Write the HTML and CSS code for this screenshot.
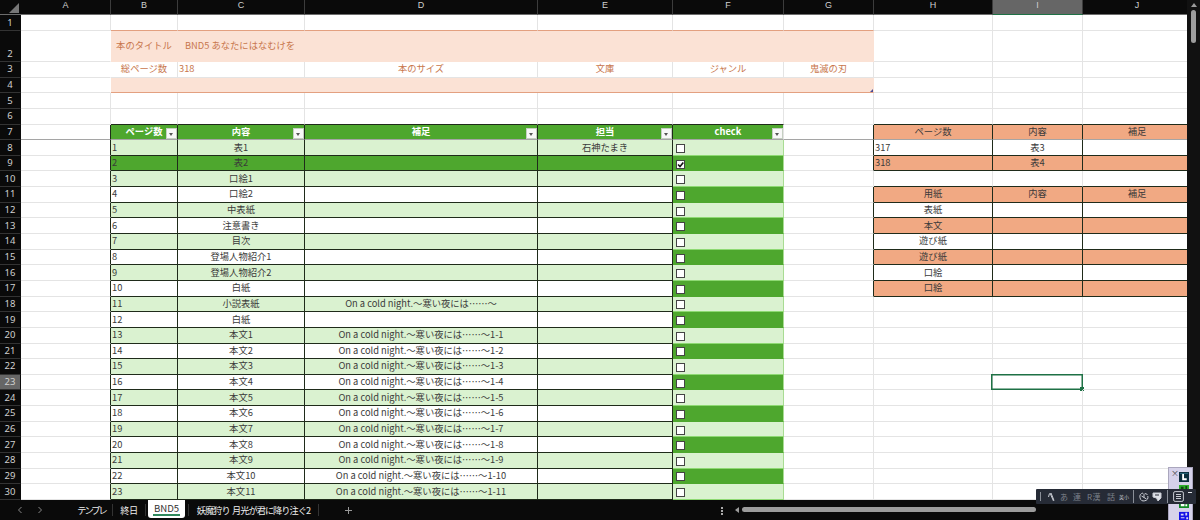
FILE: index.html
```
<!DOCTYPE html>
<html lang="ja">
<head>
    <meta charset="UTF-8">
    <meta name="viewport" content="width=device-width, initial-scale=1.0">
    <title>BND5</title>
    <link rel="stylesheet" href="styles.css">
</head>
<body>
    <div class="app">
        <div class="workspace">
            <div class="sheet" id="sheet"></div>
            <div class="v-scroll">
                <span class="arrow-up"></span>
                <span class="v-thumb"></span>
            </div>
        </div>

        <div class="bottom-bar">
            <div class="tab-nav">
                <svg viewBox="0 0 6 8"><path d="M4.5 1 1.5 4l3 3"/></svg>
                <svg viewBox="0 0 6 8"><path d="M1.5 1l3 3-3 3"/></svg>
            </div>
            <div class="tabs">
                <span class="tab tab-template">テンプレ</span>
                <span class="tab tab-day">終日</span>
                <span class="tab active">BND5</span>
                <span class="tab tab-long">妖魔狩り&nbsp; 月光が君に降り注ぐ2</span>
                <span class="add-tab"></span>
            </div>
            <div class="h-scroll">
                <span class="dots"><i></i><i></i><i></i></span>
                <span class="arrow-left"></span>
                <span class="h-thumb"></span>
            </div>
        </div>

        <div class="palette">
            <span class="palette-close">×</span>
            <div class="palette-icons">
                <svg viewBox="0 0 11 11"><rect width="11" height="11" fill="#0b2c3c"/><path d="M3.5 2h2v5h3v2h-5z" fill="#fff"/><path d="M1 1h9v1H1z" fill="#2b6c83"/></svg>
                <svg viewBox="0 0 11 11"><rect width="11" height="11" fill="#2fae2c"/><path d="M2 2h3v3H2zM7 1h2v4H7z" fill="#0b4a12"/></svg>
                <svg viewBox="0 0 11 11"><path d="M0 5h11v6H0z" fill="#128a24"/><path d="M2 6h4v3H2zM7 7h2v2H7z" fill="#fff"/></svg>
                <svg viewBox="0 0 11 11"><rect y="1" width="11" height="9" fill="#1613e6"/><path d="M2 3h3v2H2zM7 2h2v3H7zM2 7h4v1H2zM8 7h2v2H8z" fill="#d9d6f2"/></svg>
            </div>
        </div>

        <div class="ime">
            <span class="grip"></span>
            <svg class="pen" viewBox="0 0 8 10"><path d="M1.500 5 2.500 1.500M3 1l3.500 8M4 1l3 7.500"/></svg>
            <span>あ</span>
            <span>連</span>
            <span class="ime-roman">R漢</span>
            <span>話</span>
            <span class="ime-small">英小</span>
            <span class="divider"></span>
            <svg class="clock" viewBox="0 0 10 10"><path d="M4 1a4 4 0 1 0 4.800 3M5 5.500V1.500M5 5.500l2.500 1.500M6 1.500l2.500 1M2.500 4 5 5.500"/></svg>
            <svg class="shield" viewBox="0 0 10 10"><path d="M1 1h8v5L6 9 4.500 6 1 5z" fill="#dfe2e8"/><path d="M3 3h4" stroke="#262b36"/></svg>
            <span class="divider"></span>
            <svg class="list" viewBox="0 0 11 11"><rect x=".6" y=".6" width="9.800" height="9.800" rx="1.500"/><path d="M3 3.500h5M3 5.500h5M3 7.500h5"/></svg>
            <span class="minimize"></span>
        </div>
    </div>

    <script src="script.js"></script>
</body>
</html>
```
FILE: styles.css
```
* {
    margin: 0;
    padding: 0;
    box-sizing: border-box;
}

body {
    font-family: 'Noto Sans CJK JP', 'Noto Sans', sans-serif;
    background: #0a0a0a;
    overflow: hidden;
}

.app {
    position: relative;
    width: 1200px;
    height: 520px;
    display: flex;
    flex-direction: column;
    overflow: hidden;
}

.workspace {
    display: flex;
    height: 500px;
}

/* Grid of cells */
.sheet {
    width: 1187px;
    height: 500px;
    overflow: hidden;
    display: grid;
    grid-template-columns: 21px 90px 67px 127px 233px 135px 111px 90px 119px 90px 109px;
    grid-template-rows: 15px 16px 31px repeat(28, 15.65px);
    background: #fff;
}

.cell {
    position: relative;
    display: flex;
    align-items: center;
    justify-content: center;
    min-width: 0;
    padding-bottom: 2px;
    border-right: 1px solid #e4e4e4;
    border-bottom: 1px solid #e4e4e4;
    color: #3a3a3a;
    font-size: 9.3px;
    line-height: 12px;
    white-space: nowrap;
}

.head {
    background: #0a0a0a;
    color: #d0d0d0;
    border-right-color: #3c3c3c;
    border-bottom-color: #6c6c6c;
    font-family: 'Liberation Sans', sans-serif;
    font-size: 9px;
    line-height: 10px;
    padding-bottom: 4px;
}

.row-head {
    background: #0a0a0a;
    color: #d0d0d0;
    border-right-color: #0a0a0a;
    border-bottom-color: #333;
    font-family: 'Noto Sans', sans-serif;
    font-size: 9.5px;
    padding-bottom: 0;
}

.row-head.tall {
    align-items: flex-end;
    padding-bottom: 1px;
}

.head.selected,
.row-head.selected {
    background: #666;
}

.head.selected {
    border-bottom-color: #1e7145;
}

.corner {
    background: #0a0a0a;
    border-right: 0;
    border-bottom: 1px solid #6c6c6c;
}

.corner::after {
    content: '';
    position: absolute;
    right: 2px;
    bottom: 1px;
    border-left: 10px solid transparent;
    border-bottom: 10px solid #777;
}

.left {
    justify-content: flex-start;
    padding-left: 1px;
}

/* Book information */
.peach {
    background: #fbe2d5;
    border-color: #fbe2d5;
}

.info {
    color: #c8764c;
}

.gap-right {
    border-right-color: #fff;
}

.peach-line {
    border-bottom-color: #e3a080;
}

.book-title {
    padding-left: 7px;
}

.resize::after {
    content: '';
    position: absolute;
    right: 0;
    bottom: 0;
    border-left: 3px solid transparent;
    border-bottom: 3px solid #4a4a94;
}

/* Tables */
.green {
    background: #4ea72e;
}

.light {
    background: #daf2d0;
}

.orange {
    background: #f1a983;
}

.line-right {
    border-right-color: #1f2b1a;
}

.line-bottom {
    border-bottom-color: #1f2b1a;
}

.th {
    color: #fff;
    font-weight: 700;
}

.freeze {
    border-bottom-color: #a5a5a5;
}

.check-cell {
    justify-content: flex-start;
    padding: 0 0 0 3px;
    border-right-color: #a9dc93;
    border-bottom-color: #8ed973;
}

.check-cell.green {
    border-bottom-color: #4ea72e;
}

.filter {
    position: absolute;
    right: 0;
    bottom: 0;
    width: 11px;
    height: 11px;
    background: #f8f8f8;
    border: 1px solid #c5cfc2;
}

.filter::after {
    content: '';
    position: absolute;
    left: 2px;
    top: 4px;
    border: 2.5px solid transparent;
    border-top: 3px solid #555;
    border-bottom: 0;
}

.box {
    width: 9px;
    height: 9px;
    margin-top: 2px;
    background: #fff;
    border: 1px solid #444;
}

.box svg {
    display: block;
    width: 7px;
    height: 7px;
    fill: none;
    stroke: #111;
    stroke-width: 1.6;
}

.cursor {
    position: absolute;
    inset: -1px -1px -1px -2px;
    border: 1px solid #1e7145;
    box-shadow: inset 0 0 0 0.5px #1e7145;
}

.cursor::after {
    content: '';
    position: absolute;
    right: -2px;
    bottom: -2px;
    width: 4px;
    height: 4px;
    background: #1e7145;
}

/* Scrollbars */
.v-scroll {
    width: 13px;
    background: #111;
    display: flex;
    flex-direction: column;
    align-items: center;
    padding-top: 3px;
}

.arrow-up {
    border: 3px solid transparent;
    border-top: 0;
    border-bottom: 4px solid #9c9c9c;
}

.v-thumb {
    width: 5px;
    height: 33px;
    margin-top: 3px;
    border-radius: 3px;
    background: #9c9c9c;
}

.h-scroll {
    display: flex;
    align-items: center;
    height: 19px;
    margin-left: auto;
    margin-right: 164px;
}

.arrow-left {
    margin-left: 12px;
    border: 3px solid transparent;
    border-left: 0;
    border-right: 4px solid #9c9c9c;
}

.h-thumb {
    width: 294px;
    height: 5px;
    margin-left: 3px;
    border-radius: 3px;
    background: #9c9c9c;
}

.dots {
    display: flex;
    flex-direction: column;
    gap: 1px;
    margin-top: 2px;
}

.dots i {
    width: 2px;
    height: 2px;
    background: #aaa;
}

/* Sheet tabs */
.bottom-bar {
    display: flex;
    height: 20px;
    background: #0a0a0a;
}

.tab-nav {
    display: flex;
    align-items: center;
    gap: 14px;
    width: 68px;
    padding-left: 17px;
}

.tab-nav svg {
    width: 6px;
    height: 8px;
    fill: none;
    stroke: #888;
}

.tabs {
    display: flex;
    align-items: center;
    color: #eee;
    font-size: 9.2px;
}

.tab {
    height: 12px;
    line-height: 12px;
    text-align: center;
    border-right: 1px solid #333;
    white-space: nowrap;
}

.tab-template {
    width: 45px;
    padding-left: 3px;
    letter-spacing: -2px;
}

.tab-day {
    width: 33px;
    letter-spacing: -0.4px;
}

.tab.active {
    align-self: flex-start;
    width: 37px;
    height: 18px;
    margin: 0 3px 0 2px;
    font-size: 9.6px;
    line-height: 17px;
    background: #fff;
    color: #333;
    border: 0;
    border-radius: 0 0 3px 3px;
    position: relative;
}

.tab.active::after {
    content: '';
    position: absolute;
    left: 5px;
    right: 5px;
    bottom: 2px;
    height: 2px;
    background: #2f8a5d;
}

.tab-long {
    width: 131px;
    border-left: 1px solid #333;
    letter-spacing: -0.95px;
}

.add-tab {
    width: 7px;
    height: 7px;
    margin-left: 26px;
    background: linear-gradient(#999, #999) center / 7px 1px no-repeat,
                linear-gradient(#999, #999) center / 1px 7px no-repeat;
}

/* Floating tool palette */
.palette {
    position: absolute;
    left: 1168px;
    top: 467px;
    width: 25px;
    height: 53px;
    display: flex;
    justify-content: space-between;
    background: #d6d2ea;
    border: 1px solid #aaa6bd;
    border-bottom: 0;
    padding: 4px 3px 0 2px;
    overflow: hidden;
}

.palette-close {
    color: #444;
    font-size: 8px;
    line-height: 1px;
}

.palette-icons svg {
    display: block;
    width: 10px;
    height: 10px;
    margin-bottom: 3px;
}

/* Input method bar */
.ime {
    position: absolute;
    left: 1036px;
    top: 489px;
    width: 160px;
    height: 15px;
    display: flex;
    align-items: center;
    background: #262b36;
    color: #7b8089;
    font-size: 8px;
    line-height: 15px;
    border-radius: 1px;
}

.ime > * {
    flex-shrink: 0;
}

.ime span {
    margin-right: 5px;
    white-space: nowrap;
}

.ime .grip {
    width: 1px;
    height: 9px;
    margin: 0 6px 0 4px;
    background: #8a8f98;
}

.ime svg {
    fill: none;
    stroke: #c9ccd3;
}

.pen {
    width: 8px;
    height: 10px;
    margin-right: 5px;
}

.ime .ime-roman {
    margin: 0 6px 0 1px;
    letter-spacing: 0.5px;
}

.ime .ime-small {
    margin: 0 4px 0 -1px;
    color: #c9ccd3;
    font-size: 5px;
}

.ime .divider {
    width: 1px;
    height: 13px;
    margin: 0 5px 0 0;
    background: #8a8f98;
}

.clock,
.shield {
    width: 10px;
    height: 10px;
    margin-right: 3px;
}

.shield {
    margin-right: 5px;
}

.list {
    width: 11px;
    height: 11px;
}

.ime .minimize {
    align-self: flex-start;
    width: 4px;
    height: 1px;
    margin: 3px 0 0 4px;
    background: #e3e5ea;
}
```
FILE: script.js
```
const sheet = document.getElementById('sheet');

const contents = ['表1', '表2', '口絵1', '口絵2', '中表紙', '注意書き', '目次', '登場人物紹介1',
                  '登場人物紹介2', '白紙', '小説表紙', '白紙'];
for (let i = 1; i <= 11; i++) {
    contents.push('本文' + i);
}

// Right hand tables, keyed by row number
const side = {
    7: ['ページ数', '内容', '補足'],
    8: ['317', '表3', ''],
    9: ['318', '表4', ''],
    11: ['用紙', '内容', '補足'],
    12: ['表紙', '', ''],
    13: ['本文', '', ''],
    14: ['遊び紙', '', ''],
    15: ['遊び紙', '', ''],
    16: ['口絵', '', ''],
    17: ['口絵', '', '']
};
const orangeRows = [7, 9, 11, 13, 15, 17];

function addCell(className, html = '', span = 1) {
    const cell = document.createElement('div');
    cell.className = 'cell ' + className;
    cell.innerHTML = html;
    if (span > 1) {
        cell.style.gridColumn = 'span ' + span;
    }
    sheet.appendChild(cell);
}

function addSideCells(row) {
    const values = side[row] || ['', '', ''];
    values.forEach((text, i) => {
        let cls = '';
        if (side[row]) {
            cls += ' line-right line-bottom';
            if (orangeRows.includes(row)) cls += ' orange';
            if (i === 0 && /^\d/.test(text)) cls += ' left';
        }
        if (row === 6 || row === 10) cls += ' line-bottom';
        if (row === 7) cls += ' freeze';
        const cursor = row === 23 && i === 1 ? '<span class="cursor"></span>' : '';
        addCell(cls, text + cursor);
    });
}

function addInfoRow(row) {
    if (row === 2) {
        addCell('peach info', '本のタイトル');
        addCell('peach info left book-title', 'BND5 あなたにはなむけを', 5);
    } else if (row === 3) {
        addCell('info', '総ページ数');
        addCell('info left', '318');
        ['本のサイズ', '文庫', 'ジャンル', '鬼滅の刃'].forEach(text => addCell('info', text));
    } else {
        addCell('peach peach-line resize', '', 6);
    }
}

function addTableRow(row) {
    const n = row - 7;
    const fill = n === 2 ? 'green' : n % 2 ? 'light' : '';
    const lines = ' line-right line-bottom';
    let note = '';
    if (n === 11) note = 'On a cold night.～寒い夜には……～';
    if (n > 12) note = `On a cold night.～寒い夜には……～1-${n - 12}`;

    addCell(fill + lines + ' left', n);
    addCell(fill + lines, contents[n - 1]);
    addCell(fill + lines, note);
    addCell(fill + lines, n === 1 ? '石神たまき' : '');
    const tick = n === 2 ? '<svg viewBox="0 0 7 7"><path d="M1 3.5 3 5.500 6.300 1.500"/></svg>' : '';
    addCell('check-cell ' + (n % 2 ? 'light' : 'green'), `<span class="box">${tick}</span>`);
}

addCell('corner');
'ABCDEFGHIJ'.split('').forEach(c => addCell('head' + (c === 'I' ? ' selected' : ''), c));

for (let row = 1; row <= 30; row++) {
    addCell('row-head' + (row === 2 ? ' tall' : '') + (row === 23 ? ' selected' : ''), row);
    addCell((row >= 7 ? 'line-right' : row >= 2 && row <= 4 ? 'gap-right' : '') + (row === 7 ? ' freeze' : ''));

    if (row >= 2 && row <= 4) {
        addInfoRow(row);
    } else if (row === 7) {
        ['ページ数', '内容', '補足', '担当', 'check'].forEach((text, i) => {
            addCell('green th freeze' + (i < 4 ? ' line-right' : ''), text + '<span class="filter"></span>');
        });
        addCell('line-right freeze');
    } else if (row > 7) {
        addTableRow(row);
        addCell(side[row] ? 'line-right' : '');
    } else {
        for (let i = 0; i < 6; i++) {
            addCell(row === 1 ? 'peach-line' : row === 6 && i < 5 ? 'line-bottom' : '');
        }
    }
    addSideCells(row);
}
```
